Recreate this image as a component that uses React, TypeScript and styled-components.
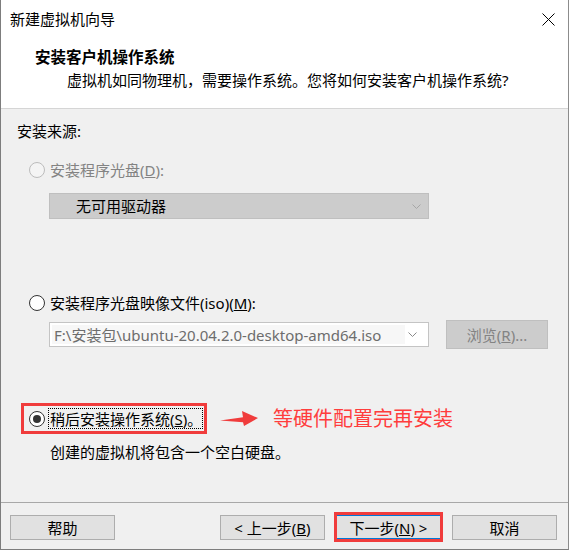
import React from "react";
import styled, { createGlobalStyle } from "styled-components";

const Global = createGlobalStyle`
  html, body { margin: 0; padding: 0; background: #ffffff; }
  body {
    font-family: "Noto Sans", "Noto Sans CJK SC", sans-serif;
    font-size: 15px;
    color: #000;
  }
  * { box-sizing: border-box; }
`;

const FONT = `"Noto Sans", "Noto Sans CJK SC", sans-serif`;

const Window = styled.div`
  width: 569px;
  height: 550px;
  display: flex;
  flex-direction: column;
  border-left: 1px solid #7d7d7d;
  border-right: 1px solid #8c8c8c;
  border-bottom: 1px solid #7d7d7d;
  background: #f0f0f0;
  font-family: ${FONT};
`;

const TitleBar = styled.div`
  height: 38px;
  flex: none;
  background: #ffffff;
  display: flex;
  align-items: center;
  justify-content: space-between;
  padding: 0 13px 0 9px;
`;

const TitleText = styled.span`
  font-size: 15px;
  line-height: 20px;
  color: #000;
`;

const Header = styled.div`
  flex: none;
  background: #ffffff;
  padding: 9px 0 18px 0;
  border-bottom: 1px solid #d5d5d5;
  display: flex;
  flex-direction: column;
  gap: 3px;
`;

const Heading = styled.div`
  padding-left: 34px;
  font-size: 15.5px;
  font-weight: 700;
  line-height: 20px;
`;

const SubHeading = styled.div`
  padding-left: 66px;
  font-size: 15px;
  line-height: 20px;
`;

const Body = styled.div`
  flex: 1;
  display: flex;
  flex-direction: column;
  padding: 12px 0 0 16px;
`;

const Text = styled.div<{ $mt?: number; $ml?: number; $color?: string }>`
  margin-top: ${(p) => p.$mt ?? 0}px;
  margin-left: ${(p) => p.$ml ?? 0}px;
  font-size: 15px;
  line-height: 20px;
  color: ${(p) => p.$color ?? "#000"};
  white-space: nowrap;
`;

const RadioRow = styled.div<{ $mt: number }>`
  margin-top: ${(p) => p.$mt}px;
  margin-left: 12px;
  height: 20px;
  display: flex;
  align-items: center;
  gap: 5px;
`;

const RadioCircle = styled.span<{ $checked?: boolean; $disabled?: boolean }>`
  width: 16px;
  height: 16px;
  flex: none;
  border-radius: 50%;
  border: 1px solid ${(p) => (p.$disabled ? "#bcbcbc" : "#333333")};
  background: ${(p) => (p.$disabled ? "#f4f4f4" : "#ffffff")};
  display: flex;
  align-items: center;
  justify-content: center;
  &::after {
    content: "";
    display: ${(p) => (p.$checked ? "block" : "none")};
    width: 8px;
    height: 8px;
    border-radius: 50%;
    background: #333333;
  }
`;

const RadioLabel = styled.span<{ $disabled?: boolean }>`
  font-size: 15px;
  line-height: 20px;
  color: ${(p) => (p.$disabled ? "#838383" : "#000")};
  white-space: nowrap;
`;

const Select = styled.div<{ $mt?: number }>`
  margin-top: ${(p) => p.$mt ?? 0}px;
  margin-left: 32px;
  width: 380px;
  height: 26px;
  flex: none;
  display: flex;
  align-items: center;
  background: #cccccc;
  border: 1px solid #bfbfbf;
  padding-left: 26px;
`;

const SelectText = styled.span`
  flex: 1;
  font-size: 15px;
  line-height: 20px;
  color: #000;
`;

const Chevron = styled.svg`
  width: 9px;
  height: 5px;
  flex: none;
  margin-right: 7px;
`;

const ComboRow = styled.div<{ $mt: number }>`
  margin-top: ${(p) => p.$mt}px;
  margin-left: 32px;
  height: 29px;
  display: flex;
  align-items: center;
  gap: 17px;
`;

const Combo = styled.div`
  width: 380px;
  height: 25px;
  display: flex;
  align-items: center;
  background: #ffffff;
  border: 1px solid #c4c4c4;
  padding: 2px;
`;

const ComboField = styled.div`
  width: 353px;
  height: 100%;
  background: #f7f7f7;
  display: flex;
  align-items: center;
  padding-left: 2px;
  font-size: 15px;
  color: #6d6d6d;
  white-space: nowrap;
  overflow: hidden;
`;

const ComboArrow = styled.div`
  flex: 1;
  display: flex;
  align-items: center;
  justify-content: center;
`;

const DisabledButton = styled.div`
  width: 102px;
  height: 29px;
  background: #cccccc;
  border: 1px solid #bfbfbf;
  display: flex;
  align-items: center;
  justify-content: center;
  font-size: 15px;
  color: #838383;
`;

const AnnotRow = styled.div<{ $mt: number }>`
  margin-top: ${(p) => p.$mt}px;
  margin-left: 4px;
  display: flex;
  align-items: center;
`;

const Highlight = styled.div`
  height: 31px;
  border: 3px solid #f03c3c;
  padding: 2px 1px 2px 5px;
  display: flex;
  align-items: center;
  gap: 3px;
`;

const FocusLabel = styled.span`
  width: 155px;
  height: 21px;
  border: 1px dotted #000;
  padding: 0 0 0 1px;
  display: flex;
  align-items: center;
  font-size: 15px;
  white-space: nowrap;
  overflow: hidden;
`;

const Arrow = styled.svg`
  width: 40px;
  height: 17px;
  margin-left: 13px;
  flex: none;
`;

const Note = styled.span`
  margin-left: 13px;
  font-size: 20px;
  line-height: 26px;
  color: #ff3d3d;
  white-space: nowrap;
`;

const Footer = styled.div`
  flex: none;
  border-top: 1px solid #a8a8a8;
  padding: 12px 0 9px 9px;
  display: flex;
  align-items: center;
`;

const Button = styled.div<{ $ml?: number; $default?: boolean }>`
  margin-left: ${(p) => p.$ml ?? 0}px;
  width: 105px;
  height: 25px;
  flex: none;
  position: relative;
  background: #e1e1e1;
  border: 1px solid ${(p) => (p.$default ? "#0078d7" : "#adadad")};
  box-shadow: ${(p) => (p.$default ? "inset 0 -1px 0 #0078d7" : "none")};
  display: flex;
  align-items: center;
  justify-content: center;
  font-size: 15px;
  color: #000;
  white-space: pre;
`;

const ButtonMark = styled.span`
  position: absolute;
  top: -4px;
  left: -3px;
  right: -3px;
  bottom: -3px;
  border: 3px solid #f03c3c;
  pointer-events: none;
`;

const ChevronIcon = ({ color }: { color: string }) => (
  <Chevron viewBox="0 0 9 5">
    <polyline points="0.5,0.5 4.5,4.5 8.5,0.5" fill="none" stroke={color} strokeWidth="1" />
  </Chevron>
);

export default function App() {
  return (
    <>
      <Global />
      <Window>
        <TitleBar>
          <TitleText>新建虚拟机向导</TitleText>
          <svg width="13" height="13" viewBox="0 0 13 13">
            <line x1="0.5" y1="0.5" x2="12.5" y2="12.5" stroke="#000" strokeWidth="1" />
            <line x1="12.5" y1="0.5" x2="0.5" y2="12.5" stroke="#000" strokeWidth="1" />
          </svg>
        </TitleBar>
        <Header>
          <Heading>安装客户机操作系统</Heading>
          <SubHeading>虚拟机如同物理机，需要操作系统。您将如何安装客户机操作系统?</SubHeading>
        </Header>
        <Body>
          <Text>安装来源:</Text>
          <RadioRow $mt={19}>
            <RadioCircle $disabled />
            <RadioLabel $disabled>
              安装程序光盘(<u>D</u>):
            </RadioLabel>
          </RadioRow>
          <Select $mt={13}>
            <SelectText>无可用驱动器</SelectText>
            <ChevronIcon color="#a6a6a6" />
          </Select>
          <RadioRow $mt={74}>
            <RadioCircle />
            <RadioLabel>
              安装程序光盘映像文件(iso)(<u>M</u>):
            </RadioLabel>
          </RadioRow>
          <ComboRow $mt={7}>
            <Combo>
              <ComboField>F:\安装包\ubuntu-20.04.2.0-desktop-amd64.iso</ComboField>
              <ComboArrow>
                <ChevronIcon color="#8a8a8a" />
              </ComboArrow>
            </Combo>
            <DisabledButton>
              浏览(<u>R</u>)...
            </DisabledButton>
          </ComboRow>
          <AnnotRow $mt={54}>
            <Highlight>
              <RadioCircle $checked />
              <FocusLabel>
                稍后安装操作系统(<u>S</u>)。
              </FocusLabel>
            </Highlight>
            <Arrow viewBox="0 0 40 17">
              <path d="M0 10.5 L23 7.2 L22 1 L38 8 L24 16 L23 12.2 Z" fill="#f03c3c" />
            </Arrow>
            <Note>等硬件配置完再安装</Note>
          </AnnotRow>
          <Text $mt={8} $ml={33}>
            创建的虚拟机将包含一个空白硬盘。
          </Text>
        </Body>
        <Footer>
          <Button>帮助</Button>
          <Button $ml={105}>
            {"< 上一步("}
            <u>B</u>
            {")"}
          </Button>
          <Button $ml={11} $default>
            {"下一步("}
            <u>N</u>
            {") >"}
            <ButtonMark />
          </Button>
          <Button $ml={11}>取消</Button>
        </Footer>
      </Window>
    </>
  );
}
